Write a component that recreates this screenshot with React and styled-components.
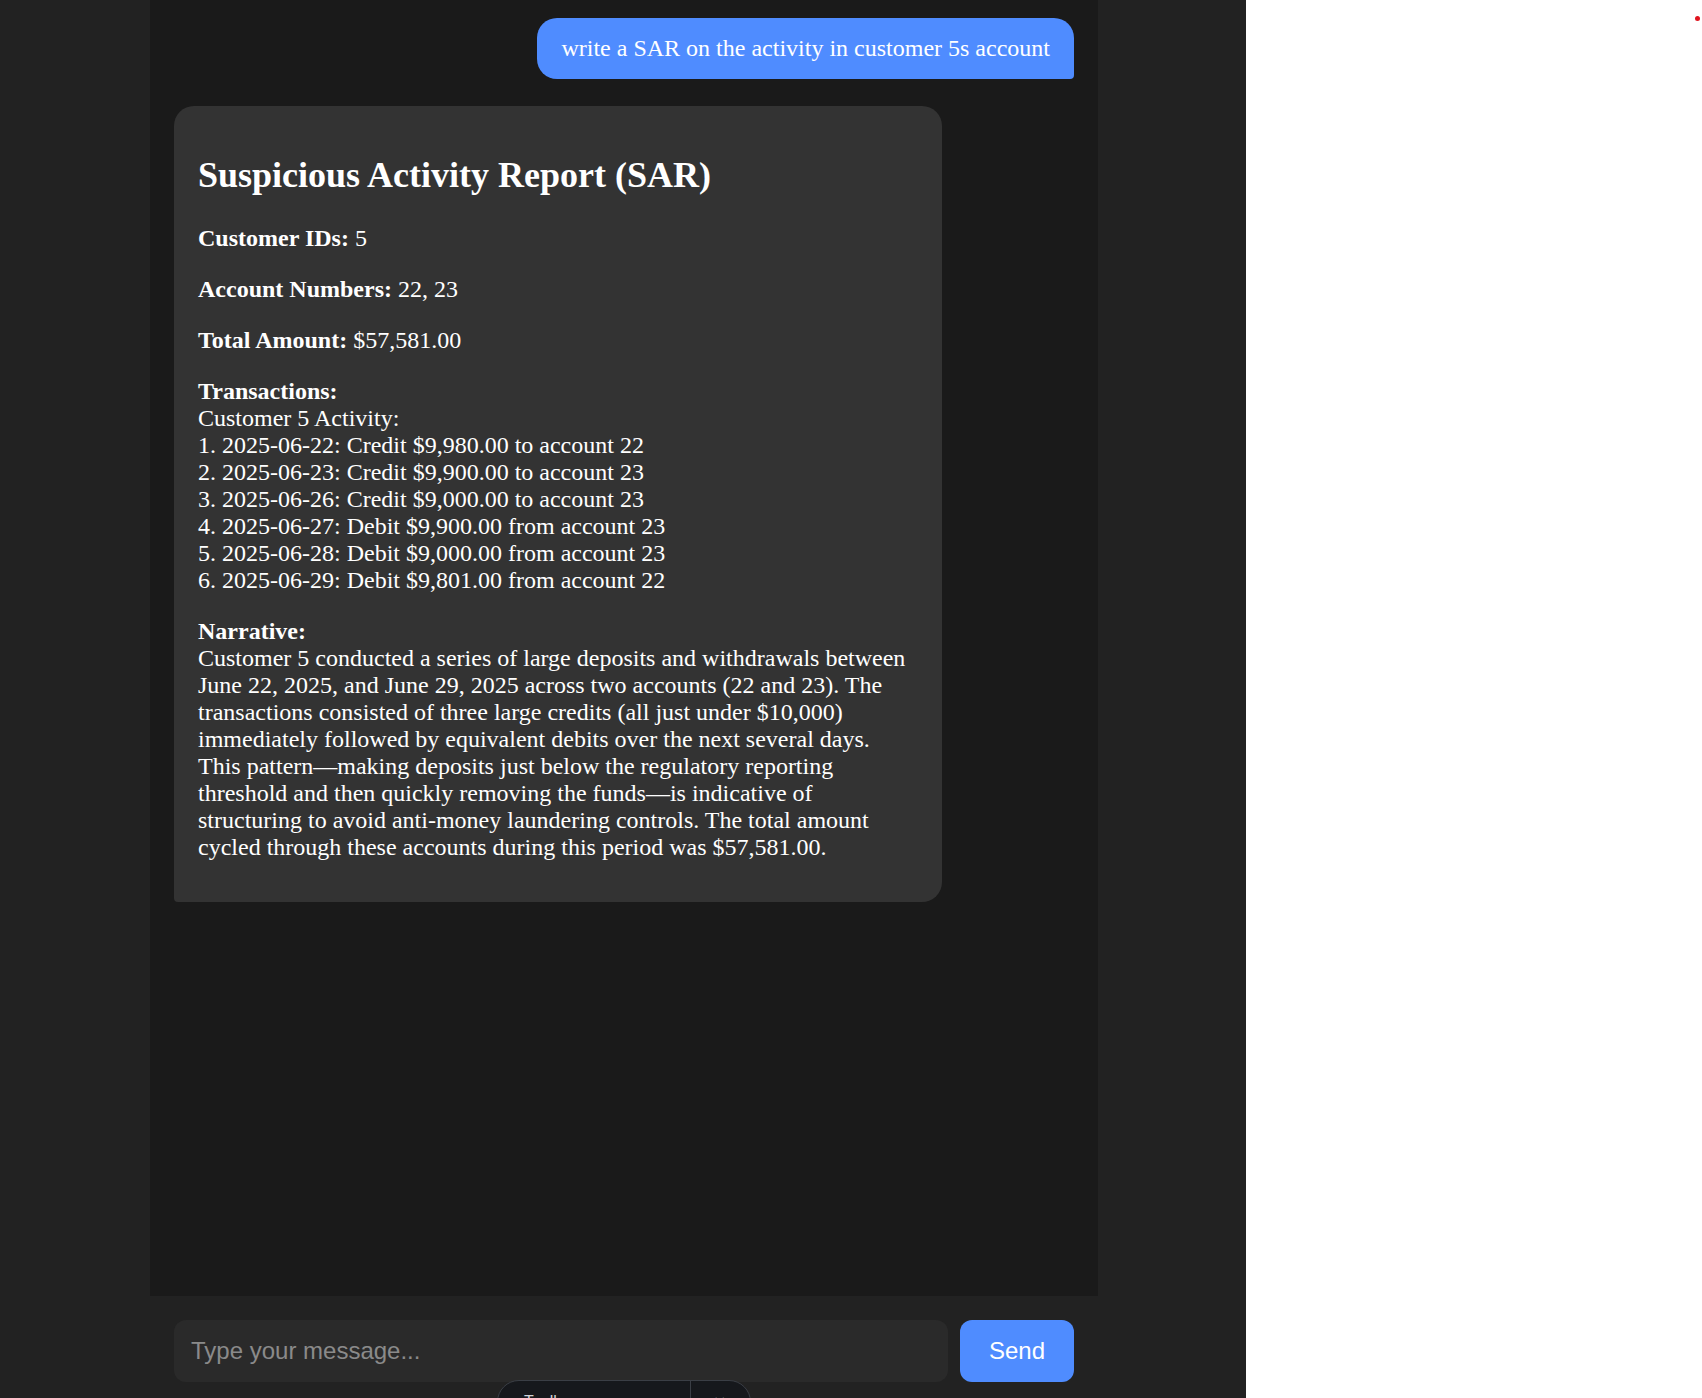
import React from 'react';
import styled, { createGlobalStyle } from 'styled-components';

const GlobalStyle = createGlobalStyle`
  html, body {
    margin: 0;
    padding: 0;
    background: #ffffff;
    overflow: hidden;
  }
  * {
    box-sizing: border-box;
  }
`;

// Whole window: dark chat area on the left, blank white panel on the right
const Page = styled.div`
  display: flex;
  height: 100vh;
  position: relative;
`;

const Main = styled.main`
  width: 1246px;
  flex-shrink: 0;
  background: #222222;
  display: flex;
  padding-left: 150px;
  position: relative;
`;

const SidePanel = styled.aside`
  flex: 1;
  background: #ffffff;
  position: relative;
`;

const RecordDot = styled.span`
  position: absolute;
  top: 16px;
  right: 2px;
  width: 5px;
  height: 5px;
  border-radius: 50%;
  background: #e0141e;
`;

const ChatColumn = styled.section`
  width: 948px;
  display: flex;
  flex-direction: column;
`;

const Messages = styled.div`
  flex: 1;
  min-height: 0;
  overflow: hidden;
  background: #1a1a1a;
  padding: 18px 24px;
  display: flex;
  flex-direction: column;
  gap: 27px;
`;

// Chat bubble, user on the right in blue, assistant on the left in grey
const Bubble = styled.div`
  align-self: ${(p) => (p.$from === 'user' ? 'flex-end' : 'flex-start')};
  max-width: 768px;
  background: ${(p) => (p.$from === 'user' ? '#4f8cff' : '#333333')};
  color: #ffffff;
  padding: 17px 24px;
  border-radius: ${(p) => (p.$from === 'user' ? '20px 20px 4px 20px' : '20px 20px 20px 4px')};
  font-family: "Liberation Serif", "Times New Roman", serif;
  font-size: 24px;
  line-height: 27px;

  h2 {
    font-size: 36px;
    line-height: 41px;
    font-weight: bold;
    margin: 32px 0 29px;
  }

  p {
    margin: 24px 0;
  }
`;

const InputBar = styled.form`
  display: flex;
  gap: 12px;
  padding: 24px 24px 16px;
`;

const MessageInput = styled.input`
  flex: 1;
  height: 62px;
  background: #2a2a2a;
  border: none;
  border-radius: 12px;
  padding: 0 17px;
  color: #ffffff;
  font-family: "Liberation Sans", Arial, sans-serif;
  font-size: 24px;
  outline: none;

  &::placeholder {
    color: #8a8a8a;
  }
`;

const SendButton = styled.button`
  width: 114px;
  height: 62px;
  border: none;
  border-radius: 12px;
  background: #4f8cff;
  color: #ffffff;
  font-family: "Liberation Sans", Arial, sans-serif;
  font-size: 24px;
  cursor: pointer;
`;

// Floating dev toolbar peeking in from the bottom edge
const FloatingBar = styled.div`
  position: absolute;
  left: 497px;
  top: 1380px;
  width: 254px;
  height: 48px;
  display: flex;
  align-items: flex-start;
  background: #16181c;
  border: 1px solid #3a3e45;
  border-radius: 22px;
  overflow: hidden;
  font-family: "Liberation Sans", Arial, sans-serif;
  font-size: 16px;
  color: #d0d2d6;
`;

const FloatingItem = styled.span`
  padding: 12px 0 0 ${(p) => p.$pad || 24}px;
  width: ${(p) => (p.$width ? `${p.$width}px` : 'auto')};
  flex: ${(p) => (p.$width ? 'none' : 1)};
  height: 100%;
  border-left: ${(p) => (p.$divider ? '1px solid #3a3e45' : 'none')};
`;

const transactions = [
  '1. 2025-06-22: Credit $9,980.00 to account 22',
  '2. 2025-06-23: Credit $9,900.00 to account 23',
  '3. 2025-06-26: Credit $9,000.00 to account 23',
  '4. 2025-06-27: Debit $9,900.00 from account 23',
  '5. 2025-06-28: Debit $9,000.00 from account 23',
  '6. 2025-06-29: Debit $9,801.00 from account 22',
];

const SarReport = () => (
  <>
    <h2>Suspicious Activity Report (SAR)</h2>
    <p><strong>Customer IDs:</strong> 5</p>
    <p><strong>Account Numbers:</strong> 22, 23</p>
    <p><strong>Total Amount:</strong> $57,581.00</p>
    <p>
      <strong>Transactions:</strong>
      <br />
      Customer 5 Activity:
      {transactions.map((t) => (
        <React.Fragment key={t}>
          <br />
          {t}
        </React.Fragment>
      ))}
    </p>
    <p>
      <strong>Narrative:</strong>
      <br />
      Customer 5 conducted a series of large deposits and withdrawals between June 22, 2025, and June 29, 2025 across two accounts (22 and 23). The transactions consisted of three large credits (all just under $10,000) immediately followed by equivalent debits over the next several days. This pattern—making deposits just below the regulatory reporting threshold and then quickly removing the funds—is indicative of structuring to avoid anti-money laundering controls. The total amount cycled through these accounts during this period was $57,581.00.
    </p>
  </>
);

export default function App() {
  return (
    <>
      <GlobalStyle />
      <Page>
        <Main>
          <ChatColumn>
            <Messages>
              <Bubble $from="user">write a SAR on the activity in customer 5s account</Bubble>
              <Bubble $from="assistant">
                <SarReport />
              </Bubble>
            </Messages>
            <InputBar onSubmit={(e) => e.preventDefault()}>
              <MessageInput placeholder="Type your message..." />
              <SendButton type="submit">Send</SendButton>
            </InputBar>
          </ChatColumn>
          <FloatingBar>
            <FloatingItem $width={192} $pad={26}>Toolbar</FloatingItem>
            <FloatingItem $divider $pad={22}>✕</FloatingItem>
          </FloatingBar>
        </Main>
        <SidePanel>
          <RecordDot />
        </SidePanel>
      </Page>
    </>
  );
}
